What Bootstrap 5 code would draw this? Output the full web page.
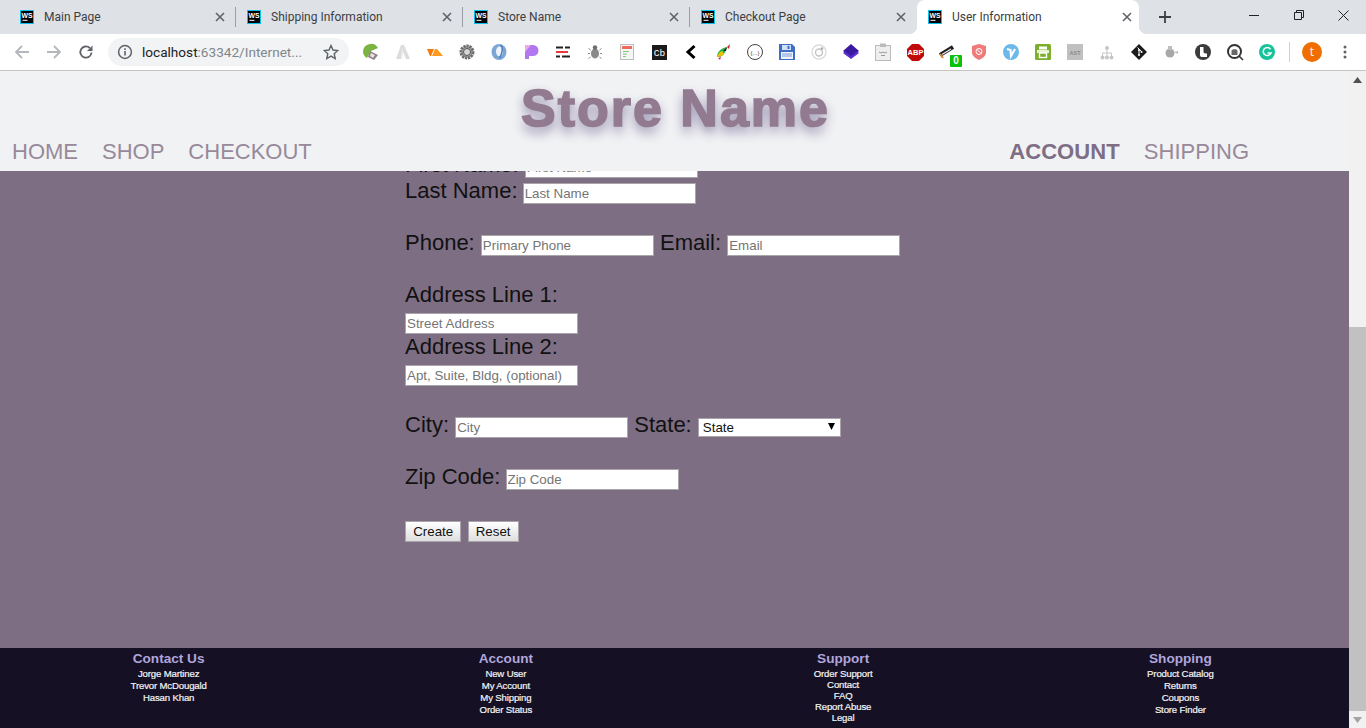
<!DOCTYPE html>
<html lang="en">
<head>
  <meta charset="UTF-8" />
  <meta name="viewport" content="width=device-width, initial-scale=1.0" />
  <title>User Information</title>
  <link href="https://cdn.jsdelivr.net/npm/bootstrap@5.3.0/dist/css/bootstrap.min.css" rel="stylesheet" />
  <style>
    html, body { height: 728px; overflow: hidden; }
    body { font-family: "Liberation Sans", Arial, sans-serif; background: #fff; color: #111; }

    .tab-strip { height: 34px; background: #dee1e6; padding-left: 9px; font-family: Roboto, "Noto Sans", sans-serif; font-size: 12px; color: #3c4043; }
    .tab-item { width: 226px; height: 34px; padding-left: 11px; padding-right: 10px; position: relative; }
    .tab-wsicon { width: 14px; height: 14px; flex: none; margin-right: 10px; }
    .tab-close { width: 10px; height: 10px; flex: none; }
    .tab-sep { width: 1px; height: 20px; background: #9aa0a6; flex: none; }
    .tab-active { background: #fff; border-radius: 8px 8px 0 0; width: 222px; margin-left: 1px; padding-right: 7px; }
    .tab-active::before, .tab-active::after { content: ""; position: absolute; bottom: 0; width: 8px; height: 8px; }
    .tab-active::before { left: -8px; background: radial-gradient(circle at 0 0, #dee1e6 8px, #fff 8.5px); }
    .tab-active::after { right: -8px; background: radial-gradient(circle at 100% 0, #dee1e6 8px, #fff 8.5px); }
    .tab-new { width: 14px; height: 14px; margin-left: 19px; }
    .win-btns { margin-left: auto; height: 34px; }
    .win-btn { width: 45px; height: 30px; }

    .tool-strip { height: 37px; background: #fff; border-bottom: 1px solid #c4c4c4; padding-left: 6px; }
    .tool-slot { width: 32px; height: 36px; flex: none; }
    .omni-box { width: 241px; height: 28px; border-radius: 14px; background: #f1f3f4; margin-left: 6px; margin-right: 6px; padding: 0 10px 0 9px; flex: none; font-family: Roboto, "Noto Sans", sans-serif; font-size: 13.6px; color: #80868b; white-space: nowrap; }
    .omni-icon { flex: none; margin-right: 9px; }
    .omni-host { color: #202124; }
    .tool-divider { width: 1px; height: 20px; background: #d0d0d0; flex: none; margin: 0 6px; }
    .avatar-dot { width: 20px; height: 20px; border-radius: 50%; background: #f06d00; color: #fff; font-size: 12px; font-family: "Open Sans", sans-serif; flex: none; margin: 0 7px 0 6px; }
    .ext-badge { position: absolute; right: 1px; bottom: 3px; width: 12px; height: 12px; background: #0bc20b; color: #fff; font-size: 10px; font-weight: 700; line-height: 12px; text-align: center; border-radius: 1px; }
    .tool-slot-badge { position: relative; }

    .page-frame { height: 657px; }
    .page-view { width: 1349px; flex: none; }
    .page-scroll { width: 17px; flex: none; background: #f1f1f1; }
    .scroll-arrow { height: 17px; flex: none; }
    .scroll-thumb { height: 384px; background: #c1c1c1; flex: none; }

    .store-head { height: 100px; background: #f1f2f4; flex: none; position: relative; }
    .store-title { font-size: 52px; height: 68px; line-height: 74px; font-weight: 700; color: #927b91; letter-spacing: 2px; -webkit-text-stroke: 1.6px #927b91; text-shadow: 0 6px 12px #8d85a8; padding-left: 2px; margin: 0; }
    .store-nav { font-size: 22px; line-height: 26px; padding: 0 100px 0 12px; }
    .store-nav a { color: #97899a; text-decoration: none; }
    .store-nav a.nav-on { color: #7e6d84; font-weight: 700; letter-spacing: .1px; }

    .form-pane { background: #7d6e84; overflow: hidden; }
    .user-form { padding-left: 405px; margin-top: -19px; font-size: 22px; line-height: 26px; color: #111; }
    .field-group { margin-bottom: 26px; }
    .field-box { width: 173px; height: 21px; font-size: 13.333px; font-family: "Liberation Sans", Arial, sans-serif; line-height: 15px; padding: 1px; border: 1px solid #a9a5ab; background: #fff; color: #111; vertical-align: baseline; }
    .field-box::placeholder { color: #757575; opacity: 1; }
    .field-tight { margin-left: -1px; }
    .select-wrap { position: relative; display: inline-block; }
    .field-select { display: block; width: 143px; height: 19px; padding: 0 0 0 4px; border-radius: 0; appearance: none; }
    .select-arrow { position: absolute; right: 6px; top: 5px; width: 7px; height: 7px; }
    .plain-btn { height: 21px; font-size: 13.333px; font-family: "Liberation Sans", Arial, sans-serif; line-height: 15px; padding: 1px 7.2px; color: #111; border: 1px solid #a9a5ab; border-radius: 0; background: linear-gradient(#ffffff, #dedede); }

    .store-foot { height: 80px; background: #151024; flex: none; padding-top: 3px; text-align: center; }
    .foot-title { font-size: 13.6px; line-height: 15px; font-weight: 700; color: #b0a6dc; margin: 0 0 2px; }
    .foot-line { font-size: 9.6px; line-height: 12px; color: #f4f4f4; letter-spacing: -.15px; -webkit-text-stroke: .2px #f4f4f4; }
    .foot-tight .foot-line { line-height: 11px; }
  </style>
</head>
<body>
  <div class="tab-strip d-flex align-items-center">
    <div class="tab-item d-flex align-items-center">
      <svg class="tab-wsicon" viewBox="0 0 14 14"><rect width="14" height="14" fill="#0cc0ee" /><rect x="1" y="1" width="12" height="12" fill="#000" /><text x="7" y="7.6" text-anchor="middle" font-family="Liberation Sans" font-weight="700" font-size="6.8" fill="#fff">WS</text><rect x="2.5" y="9.8" width="5" height="1" fill="#fff" /></svg>
      <span class="flex-grow-1">Main Page</span>
      <svg class="tab-close" viewBox="0 0 10 10"><path d="M1 1l8 8M9 1l-8 8" stroke="#5f6368" stroke-width="1.6" fill="none" /></svg>
    </div>
    <div class="tab-sep"></div>
    <div class="tab-item d-flex align-items-center">
      <svg class="tab-wsicon" viewBox="0 0 14 14"><rect width="14" height="14" fill="#0cc0ee" /><rect x="1" y="1" width="12" height="12" fill="#000" /><text x="7" y="7.6" text-anchor="middle" font-family="Liberation Sans" font-weight="700" font-size="6.8" fill="#fff">WS</text><rect x="2.5" y="9.8" width="5" height="1" fill="#fff" /></svg>
      <span class="flex-grow-1">Shipping Information</span>
      <svg class="tab-close" viewBox="0 0 10 10"><path d="M1 1l8 8M9 1l-8 8" stroke="#5f6368" stroke-width="1.6" fill="none" /></svg>
    </div>
    <div class="tab-sep"></div>
    <div class="tab-item d-flex align-items-center">
      <svg class="tab-wsicon" viewBox="0 0 14 14"><rect width="14" height="14" fill="#0cc0ee" /><rect x="1" y="1" width="12" height="12" fill="#000" /><text x="7" y="7.6" text-anchor="middle" font-family="Liberation Sans" font-weight="700" font-size="6.8" fill="#fff">WS</text><rect x="2.5" y="9.8" width="5" height="1" fill="#fff" /></svg>
      <span class="flex-grow-1">Store Name</span>
      <svg class="tab-close" viewBox="0 0 10 10"><path d="M1 1l8 8M9 1l-8 8" stroke="#5f6368" stroke-width="1.6" fill="none" /></svg>
    </div>
    <div class="tab-sep"></div>
    <div class="tab-item d-flex align-items-center">
      <svg class="tab-wsicon" viewBox="0 0 14 14"><rect width="14" height="14" fill="#0cc0ee" /><rect x="1" y="1" width="12" height="12" fill="#000" /><text x="7" y="7.6" text-anchor="middle" font-family="Liberation Sans" font-weight="700" font-size="6.8" fill="#fff">WS</text><rect x="2.5" y="9.8" width="5" height="1" fill="#fff" /></svg>
      <span class="flex-grow-1">Checkout Page</span>
      <svg class="tab-close" viewBox="0 0 10 10"><path d="M1 1l8 8M9 1l-8 8" stroke="#5f6368" stroke-width="1.6" fill="none" /></svg>
    </div>
    <div class="tab-item tab-active d-flex align-items-center">
      <svg class="tab-wsicon" viewBox="0 0 14 14"><rect width="14" height="14" fill="#0cc0ee" /><rect x="1" y="1" width="12" height="12" fill="#000" /><text x="7" y="7.6" text-anchor="middle" font-family="Liberation Sans" font-weight="700" font-size="6.8" fill="#fff">WS</text><rect x="2.5" y="9.8" width="5" height="1" fill="#fff" /></svg>
      <span class="flex-grow-1">User Information</span>
      <svg class="tab-close" viewBox="0 0 10 10"><path d="M1 1l8 8M9 1l-8 8" stroke="#5f6368" stroke-width="1.6" fill="none" /></svg>
    </div>
    <svg class="tab-new" viewBox="0 0 14 14"><path d="M7 1v12M1 7h12" stroke="#3c4043" stroke-width="1.8" /></svg>
    <div class="win-btns d-flex align-items-start">
      <div class="win-btn d-flex align-items-center justify-content-center"><svg width="10" height="10" viewBox="0 0 10 10"><path d="M0 5.5h10" stroke="#222" /></svg></div>
      <div class="win-btn d-flex align-items-center justify-content-center"><svg width="10" height="10" viewBox="0 0 10 10"><path d="M.5 2.5h7v7h-7zM2.5 2.5v-2h7v7h-2" stroke="#222" fill="none" /></svg></div>
      <div class="win-btn d-flex align-items-center justify-content-center"><svg width="11" height="11" viewBox="0 0 11 11"><path d="M.5.5l10 10M10.5.5l-10 10" stroke="#222" /></svg></div>
    </div>
  </div>

  <div class="tool-strip d-flex align-items-center">
    <div class="tool-slot d-flex align-items-center justify-content-center"><svg width="16" height="16" viewBox="0 0 16 16"><path d="M15 8H2M8 2L2 8l6 6" stroke="#b4b7bb" stroke-width="1.8" fill="none" /></svg></div>
    <div class="tool-slot d-flex align-items-center justify-content-center"><svg width="16" height="16" viewBox="0 0 16 16"><path d="M1 8h13M8 2l6 6-6 6" stroke="#b4b7bb" stroke-width="1.8" fill="none" /></svg></div>
    <div class="tool-slot d-flex align-items-center justify-content-center"><svg width="16" height="16" viewBox="0 0 16 16"><path d="M13.5 8.5A5.6 5.6 0 1 1 11.8 4" stroke="#5f6368" stroke-width="1.8" fill="none" /><path d="M14.5 1.5v5.5h-5.5z" fill="#5f6368" /></svg></div>
    <div class="omni-box d-flex align-items-center">
      <svg width="16" height="16" viewBox="0 0 16 16" class="omni-icon"><circle cx="8" cy="8" r="6.4" stroke="#5f6368" stroke-width="1.5" fill="none" /><path d="M8 7v4.5M8 4.3v1.6" stroke="#5f6368" stroke-width="1.6" /></svg>
      <span class="flex-grow-1"><span class="omni-host">localhost</span>:63342/Internet...</span>
      <svg width="16" height="16" viewBox="0 0 16 16"><path d="M8 1.5l2 4.5 4.8.5-3.6 3.2 1 4.8L8 12.1l-4.2 2.4 1-4.800L1.200 6.500 6 6z" stroke="#5f6368" stroke-width="1.4" fill="none" /></svg>
    </div>
    <!-- extension icons -->
    <div class="tool-slot d-flex align-items-center justify-content-center"><svg width="18" height="18" viewBox="0 0 18 18"><path d="M1 9a8 8 0 0 1 15-4L9 8 5 15A8 8 0 0 1 1 9z" fill="#7cb342" /><path d="M8 8l8 4-4 5-6-3z" fill="#8d8383" /><path d="M9 10l4 2-2 3-3-2z" fill="#e8e0e0" /></svg></div>
    <div class="tool-slot d-flex align-items-center justify-content-center"><svg width="16" height="16" viewBox="0 0 16 16"><path d="M6 1h3l6 14h-4L8 8l-2 7H1z" fill="#dcdcdc" /><path d="M7.500 3L6 15h2z" fill="#f4f4f4" /></svg></div>
    <div class="tool-slot d-flex align-items-center justify-content-center"><svg width="18" height="18" viewBox="0 0 18 18"><path d="M1 6h7L5 13H4z" fill="#f47a0c" /><path d="M9 6h2l6 7H6z" fill="#ff9a1e" /></svg></div>
    <div class="tool-slot d-flex align-items-center justify-content-center"><svg width="18" height="18" viewBox="0 0 18 18"><circle cx="9" cy="9" r="6" stroke="#6d6d6d" stroke-width="3" stroke-dasharray="2.200 .8" fill="#a8a8a8" /><circle cx="9" cy="9" r="3.500" stroke="#555" stroke-width="1" fill="#d8d8d8" /></svg></div>
    <div class="tool-slot d-flex align-items-center justify-content-center"><svg width="18" height="18" viewBox="0 0 18 18"><ellipse cx="9" cy="9" rx="7.500" ry="8" fill="#7ba7d6" /><ellipse cx="9.500" cy="8.500" rx="3.500" ry="5" fill="#f0f4fa" /><path d="M10.500 2c3 2 2 8-1 13" stroke="#4a7fbe" stroke-width="1.500" fill="none" /></svg></div>
    <div class="tool-slot d-flex align-items-center justify-content-center"><svg width="16" height="16" viewBox="0 0 16 16"><path d="M2 1h8a5.500 5.500 0 0 1 0 11H6v3H2z" fill="#b176f0" /><path d="M2 1h6L2 8z" fill="#ecaaea" /></svg></div>
    <div class="tool-slot d-flex align-items-center justify-content-center"><svg width="14" height="12" viewBox="0 0 14 12"><path d="M0 1.500h7M9 1.500h5M0 10.500h4M6 10.500h8" stroke="#222" stroke-width="2" /><path d="M0 6h12" stroke="#e8383a" stroke-width="2" /></svg></div>
    <div class="tool-slot d-flex align-items-center justify-content-center"><svg width="16" height="16" viewBox="0 0 16 16"><ellipse cx="8" cy="9.500" rx="4" ry="5" fill="#8a8a8a" /><circle cx="8" cy="3.500" r="2.200" fill="#6e6e6e" /><path d="M3.500 6L1.500 4.500M12.500 6l2-1.500M3 9.500H1M13 9.500h2M3.500 13l-2 1.500M12.500 13l2 1.500" stroke="#8a8a8a" /></svg></div>
    <div class="tool-slot d-flex align-items-center justify-content-center"><svg width="14" height="16" viewBox="0 0 14 16"><rect x=".5" y=".5" width="13" height="15" fill="#f6f6f6" stroke="#bdbdbd" /><rect x="2" y="2" width="10" height="3" fill="#ef6a5a" /><path d="M3 7.500h6M3 10h4M3 12.500h3" stroke="#7ec87e" /></svg></div>
    <div class="tool-slot d-flex align-items-center justify-content-center"><svg width="15" height="15" viewBox="0 0 15 15"><rect width="15" height="15" fill="#1a1a1a" /><text x="7.500" y="11" text-anchor="middle" font-family="Liberation Mono" font-size="9.500" fill="#fff">Cb</text></svg></div>
    <div class="tool-slot d-flex align-items-center justify-content-center"><svg width="12" height="16" viewBox="0 0 12 16"><path d="M9.500 2L3 8l6.500 6" stroke="#000" stroke-width="3" fill="none" /></svg></div>
    <div class="tool-slot d-flex align-items-center justify-content-center"><svg width="18" height="18" viewBox="0 0 18 18"><path d="M3 14c0-5 4-9 10-10-1 5-4 9-7 10z" fill="#29b34a" /><path d="M3 14c1-3 3-5 5-6l2 3c-2 2-4 3-7 3z" fill="#f2c200" /><path d="M4 15l3-1-1 3z" fill="#e0218a" /><path d="M13 4l3-3-1 5z" fill="#d32020" /><path d="M9 8l4-4-1 4z" fill="#222" /></svg></div>
    <div class="tool-slot d-flex align-items-center justify-content-center"><svg width="18" height="18" viewBox="0 0 18 18"><circle cx="9" cy="9" r="7.500" stroke="#444" fill="#fff" /><text x="9" y="11.500" text-anchor="middle" font-family="Liberation Sans" font-size="6" fill="#444">{...}</text></svg></div>
    <div class="tool-slot d-flex align-items-center justify-content-center"><svg width="16" height="16" viewBox="0 0 16 16"><path d="M0 0h13l3 3v13H0z" fill="#3d70c4" /><rect x="3" y="1" width="9" height="5" fill="#cfe0f7" /><rect x="8.500" y="1.800" width="2" height="3.200" fill="#3d70c4" /><rect x="2" y="8" width="12" height="7" fill="#eef3fb" /><path d="M3 10h10M3 12h10" stroke="#7a9cd6" /></svg></div>
    <div class="tool-slot d-flex align-items-center justify-content-center"><svg width="16" height="16" viewBox="0 0 16 16"><circle cx="8" cy="8" r="7" stroke="#dcdcdc" stroke-width="1.400" fill="none" /><circle cx="8" cy="8.500" r="3.500" stroke="#c4c4c4" stroke-width="1.400" fill="none" /><circle cx="11" cy="4.500" r="1.300" fill="#aaa" /></svg></div>
    <div class="tool-slot d-flex align-items-center justify-content-center"><svg width="16" height="16" viewBox="0 0 16 16"><path d="M8 0l8 7-8 6-8-6z" fill="#3a1a9e" /><path d="M0 9l8 6 8-6-2-1.500L8 12 2 7.500z" fill="#5a2ad0" /></svg></div>
    <div class="tool-slot d-flex align-items-center justify-content-center"><svg width="16" height="18" viewBox="0 0 16 18"><rect x=".5" y="2.500" width="15" height="15" fill="#eee" stroke="#bbb" /><rect x="5" y=".5" width="6" height="3.500" fill="#bbb" /><path d="M4 9l2 1 2-1M8 9l2 1 2-1M6 12.500h4" stroke="#999" fill="none" /></svg></div>
    <div class="tool-slot d-flex align-items-center justify-content-center"><svg width="17" height="17" viewBox="0 0 17 17"><path d="M5 0h7l5 5v7l-5 5H5l-5-5V5z" fill="#c00a0a" /><text x="8.500" y="11" text-anchor="middle" font-family="Liberation Sans" font-weight="700" font-size="7.500" fill="#fff">ABP</text></svg></div>
    <div class="tool-slot tool-slot-badge d-flex align-items-center justify-content-center"><svg width="16" height="14" viewBox="0 0 16 14"><path d="M1 10L14 2" stroke="#222" stroke-width="4" /><path d="M3 9.500L12 4" stroke="#eee" stroke-width="1.200" /><path d="M1 9l3 4" stroke="#d88a3a" stroke-width="2" /></svg><span class="ext-badge">0</span></div>
    <div class="tool-slot d-flex align-items-center justify-content-center"><svg width="14" height="16" viewBox="0 0 14 16"><path d="M7 0l7 2v6c0 4-3 6-7 8-4-2-7-4-7-8V2z" fill="#ee7a7a" /><circle cx="7" cy="7.500" r="3" stroke="#fff" fill="none" /><path d="M5 5.500l4 4" stroke="#fff" /></svg></div>
    <div class="tool-slot d-flex align-items-center justify-content-center"><svg width="16" height="16" viewBox="0 0 16 16"><circle cx="8" cy="8" r="8" fill="#6cb8e8" /><path d="M4 5l3.500 1 .5 6 4-7" stroke="#fff" stroke-width="2.200" fill="none" /></svg></div>
    <div class="tool-slot d-flex align-items-center justify-content-center"><svg width="16" height="16" viewBox="0 0 16 16"><rect width="16" height="16" rx="1.500" fill="#7cb02c" /><rect x="4" y="2.500" width="8" height="3" fill="#fff" /><rect x="2" y="6" width="12" height="3" fill="#e8f3d0" /><rect x="4.500" y="9" width="7" height="4.500" fill="none" stroke="#fff" stroke-width="1.400" /></svg></div>
    <div class="tool-slot d-flex align-items-center justify-content-center"><svg width="16" height="16" viewBox="0 0 16 16"><rect width="16" height="16" fill="#c0c0c0" /><text x="8" y="10.500" text-anchor="middle" font-family="Liberation Sans" font-weight="700" font-size="5.500" fill="#8a8a8a">AST</text></svg></div>
    <div class="tool-slot d-flex align-items-center justify-content-center"><svg width="14" height="15" viewBox="0 0 14 15"><circle cx="7" cy="3" r="2" fill="#c6c6c6" /><path d="M7 5v3M2.500 11V8h9v3M7 8v3" stroke="#c6c6c6" fill="none" /><circle cx="2.500" cy="12.500" r="2" fill="#c6c6c6" /><circle cx="7" cy="12.500" r="2" fill="#c6c6c6" /><circle cx="11.500" cy="12.500" r="2" fill="#c6c6c6" /></svg></div>
    <div class="tool-slot d-flex align-items-center justify-content-center"><svg width="16" height="16" viewBox="0 0 16 16"><path d="M8 0l8 8-8 8-8-8z" fill="#1c1c1c" /><path d="M6.500 3.500L11 8M8 6v5" stroke="#fff" stroke-width="1" /><circle cx="8" cy="6" r="1" fill="#fff" /><circle cx="8" cy="11" r="1" fill="#fff" /><circle cx="10.500" cy="8" r="1" fill="#fff" /></svg></div>
    <div class="tool-slot d-flex align-items-center justify-content-center"><svg width="14" height="14" viewBox="0 0 14 14"><circle cx="6" cy="8" r="4.500" fill="#a8a8a8" /><rect x="4" y="1" width="4" height="4" fill="#bdbdbd" /><path d="M10 7l4-1v3z" fill="#bdbdbd" /></svg></div>
    <div class="tool-slot d-flex align-items-center justify-content-center"><svg width="16" height="16" viewBox="0 0 16 16"><circle cx="8" cy="8" r="8" fill="#3b3b3b" /><path d="M5 3h3.500v5c0 1.500 2 1.500 3.500 1.500V13H7c-1.500 0-2-1-2-2z" fill="#fff" /></svg></div>
    <div class="tool-slot d-flex align-items-center justify-content-center"><svg width="17" height="17" viewBox="0 0 17 17"><circle cx="7.500" cy="7.500" r="6.500" stroke="#333" stroke-width="2" fill="#fff" /><path d="M4.500 11V7c0-2.500 6-2.500 6 0v4" fill="#666" /><path d="M12 12l4 4" stroke="#333" stroke-width="1.600" /></svg></div>
    <div class="tool-slot d-flex align-items-center justify-content-center"><svg width="16" height="16" viewBox="0 0 16 16"><circle cx="8" cy="8" r="8" fill="#15c39a" /><path d="M11.500 5.200A4 4 0 1 0 12 9H8.500" stroke="#fff" stroke-width="1.500" fill="none" /></svg></div>
    <div class="tool-divider"></div>
    <div class="avatar-dot d-flex align-items-center justify-content-center">t</div>
    <div class="tool-slot d-flex align-items-center justify-content-center"><svg width="4" height="14" viewBox="0 0 4 14"><circle cx="2" cy="2" r="1.500" fill="#5f6368" /><circle cx="2" cy="7" r="1.500" fill="#5f6368" /><circle cx="2" cy="12" r="1.500" fill="#5f6368" /></svg></div>
  </div>

  <div class="page-frame d-flex">
    <div class="page-view d-flex flex-column">
      <header class="store-head">
        <h1 class="store-title text-center">Store Name</h1>
        <nav class="store-nav d-flex justify-content-between">
          <div class="d-flex gap-4"><a href="#">HOME</a><a href="#">SHOP</a><a href="#">CHECKOUT</a></div>
          <div class="d-flex gap-4"><a href="#" class="nav-on">ACCOUNT</a><a href="#">SHIPPING</a></div>
        </nav>
      </header>

      <main class="form-pane flex-grow-1">
        <form class="user-form">
          <div class="field-group">
            <label>First Name:</label> <input class="field-box" type="text" placeholder="First Name" /><br />
            <label>Last Name:</label> <input class="field-box field-tight" type="text" placeholder="Last Name" />
          </div>
          <div class="field-group">
            <label>Phone:</label> <input class="field-box" type="text" placeholder="Primary Phone" />
            <label>Email:</label> <input class="field-box" type="text" placeholder="Email" />
          </div>
          <div class="field-group">
            <label>Address Line 1:</label><br />
            <input class="field-box" type="text" placeholder="Street Address" /><br />
            <label>Address Line 2:</label><br />
            <input class="field-box" type="text" placeholder="Apt, Suite, Bldg, (optional)" />
          </div>
          <div class="field-group">
            <label>City:</label> <input class="field-box" type="text" placeholder="City" />
            <label>State:</label>
            <span class="select-wrap">
              <select class="field-box field-select"><option>State</option></select>
              <svg class="select-arrow" viewBox="0 0 7 7"><path d="M0 0h7L3.500 7z" fill="#000" /></svg>
            </span>
          </div>
          <div class="field-group">
            <label>Zip Code:</label> <input class="field-box field-tight" type="text" placeholder="Zip Code" />
          </div>
          <div>
            <button type="button" class="plain-btn">Create</button>
            <button type="button" class="plain-btn">Reset</button>
          </div>
        </form>
      </main>

      <footer class="store-foot">
        <div class="row g-0">
          <div class="col-3">
            <h6 class="foot-title">Contact Us</h6>
            <div class="foot-line">Jorge Martinez</div>
            <div class="foot-line">Trevor McDougald</div>
            <div class="foot-line">Hasan Khan</div>
          </div>
          <div class="col-3">
            <h6 class="foot-title">Account</h6>
            <div class="foot-line">New User</div>
            <div class="foot-line">My Account</div>
            <div class="foot-line">My Shipping</div>
            <div class="foot-line">Order Status</div>
          </div>
          <div class="col-3 foot-tight">
            <h6 class="foot-title">Support</h6>
            <div class="foot-line">Order Support</div>
            <div class="foot-line">Contact</div>
            <div class="foot-line">FAQ</div>
            <div class="foot-line">Report Abuse</div>
            <div class="foot-line">Legal</div>
          </div>
          <div class="col-3">
            <h6 class="foot-title">Shopping</h6>
            <div class="foot-line">Product Catalog</div>
            <div class="foot-line">Returns</div>
            <div class="foot-line">Coupons</div>
            <div class="foot-line">Store Finder</div>
          </div>
        </div>
      </footer>
    </div>

    <div class="page-scroll d-flex flex-column">
      <div class="scroll-arrow d-flex align-items-center justify-content-center"><svg width="9" height="6" viewBox="0 0 9 6"><path d="M4.500 0L9 6H0z" fill="#505050" /></svg></div>
      <div class="flex-grow-1"></div>
      <div class="scroll-thumb"></div>
      <div class="scroll-arrow d-flex align-items-center justify-content-center"><svg width="9" height="6" viewBox="0 0 9 6"><path d="M4.500 6L9 0H0z" fill="#a3a3a3" /></svg></div>
    </div>
  </div>

  <script src="https://cdn.jsdelivr.net/npm/bootstrap@5.3.0/dist/js/bootstrap.bundle.min.js"></script>
</body>
</html>
